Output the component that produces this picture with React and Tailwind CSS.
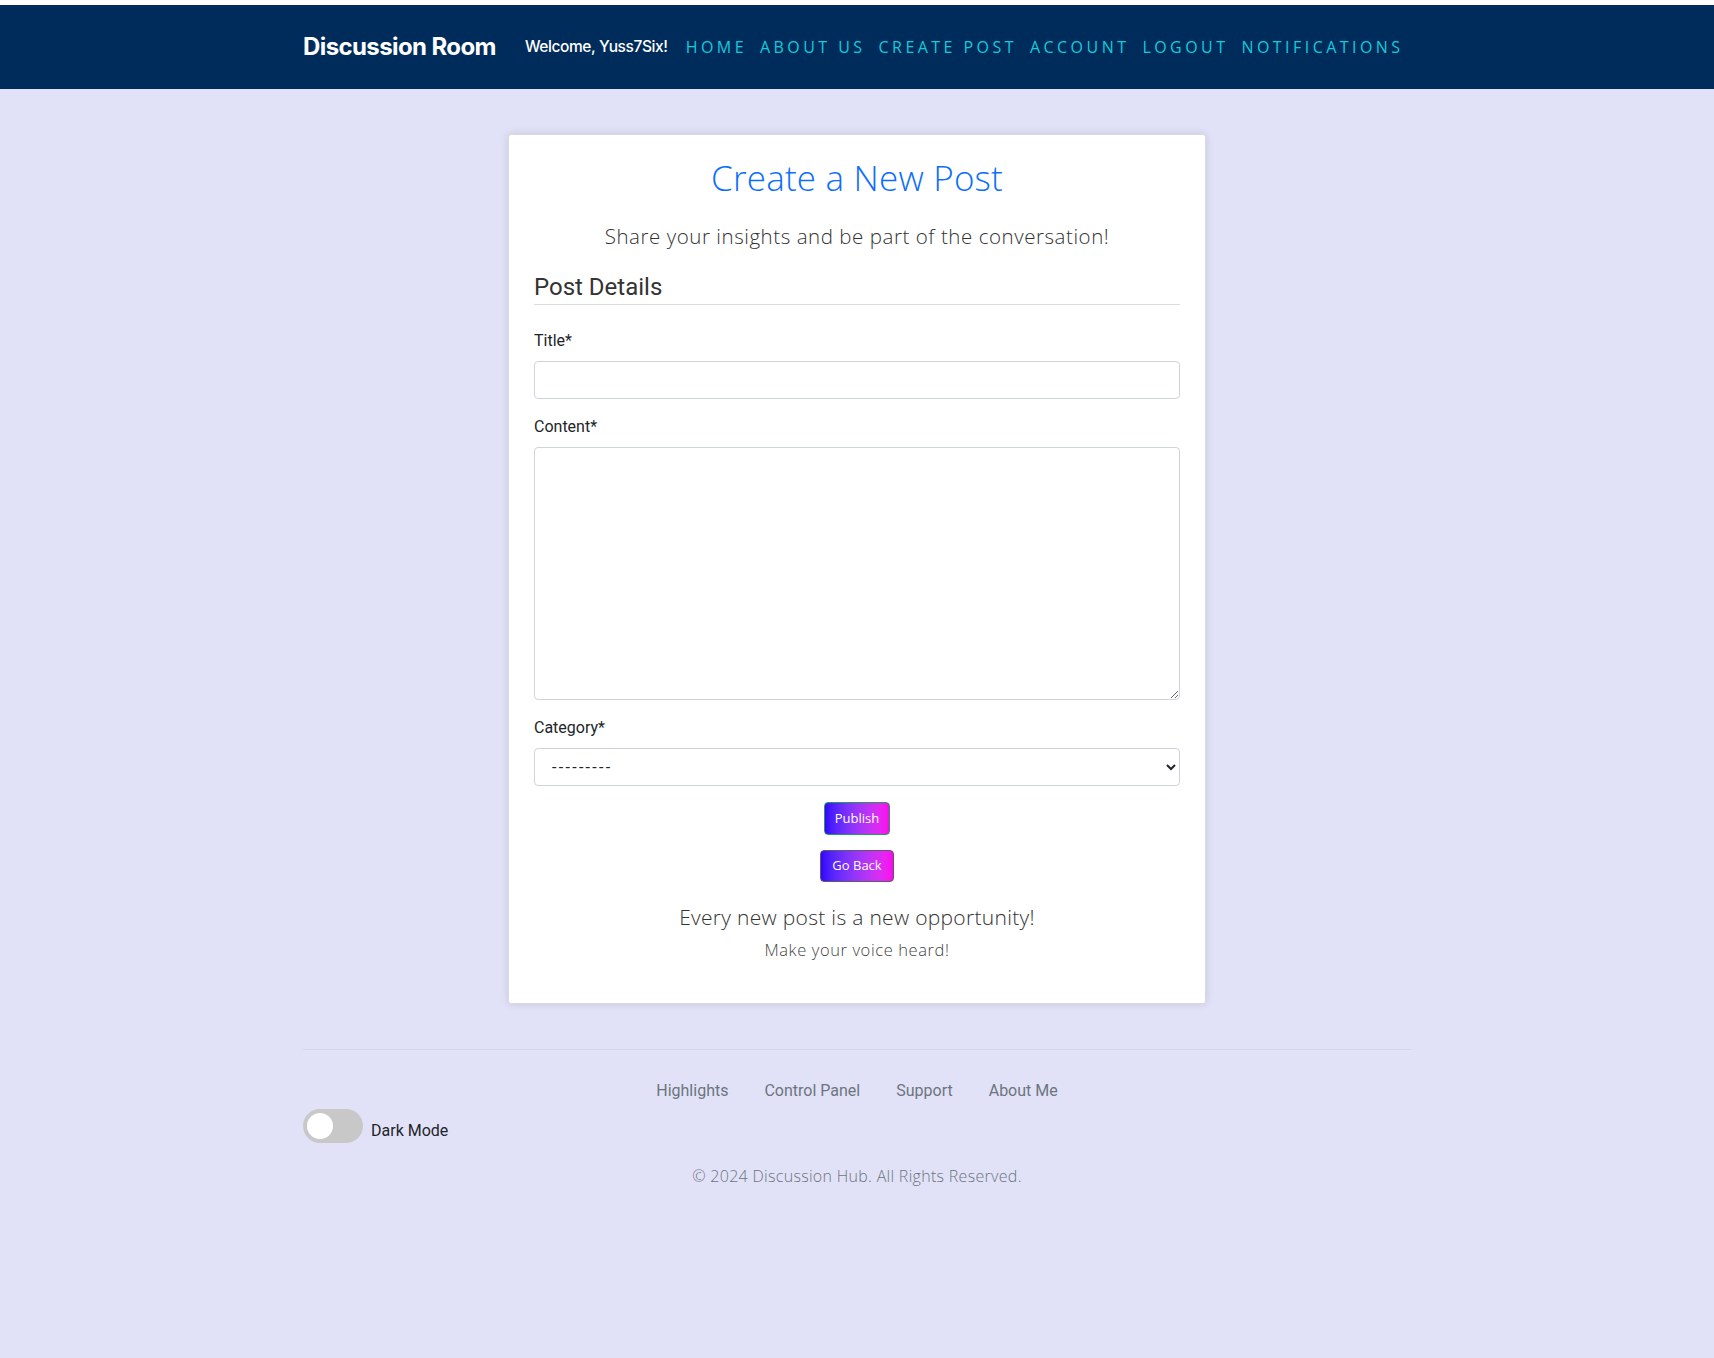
import { useState } from "react";

const poppins = { fontFamily: "'Open Sans', 'Lato', sans-serif" };

const navLinks = ["Home", "About Us", "Create Post", "Account", "Logout", "Notifications"];
const footerLinks = ["Highlights", "Control Panel", "Support", "About Me"];

function Field({ label, children }) {
  return (
    <div className="mb-[16px]">
      <label className="block text-[16px] text-[#212529] mb-[8px]">{label}</label>
      {children}
    </div>
  );
}

export default function App() {
  const [dark, setDark] = useState(false);

  return (
    <div className="min-h-screen pt-[5px] bg-white font-['Inter',sans-serif]">
      <nav className="bg-[#002c5b] h-[84px]">
        <div className="w-[1140px] mx-auto px-[16px] h-full flex items-center">
          <span className="text-white font-bold text-[24px] tracking-[-0.6px]">Discussion Room</span>
          <span className="text-white font-medium text-[15.5px] ml-[29px] tracking-[-0.4px]">Welcome, Yuss7Six!</span>
          <ul className="flex items-center ml-[18px] gap-[13px]">
            {navLinks.map((l) => (
              <li key={l} className="text-[#14cadb] uppercase text-[16px] tracking-[3.45px]" style={poppins}>
                {l}
              </li>
            ))}
          </ul>
        </div>
      </nav>

      <div className="bg-[#e1e2f7] pb-[200px]">
        <main className="pt-[45px] flex justify-center">
          <div className="w-[698px] bg-white rounded-[3px] border border-[#d9d9e6] shadow-[0_0_8px_rgba(0,0,0,0.12)] px-[25px] pt-[22px] pb-[41px]">
            <h1 className="text-center text-[#0d6efd] text-[35px] font-light leading-[1.2] tracking-[0.2px]" style={poppins}>
              Create a New Post
            </h1>
            <p className="text-center text-[#333] text-[20.5px] font-light mt-[22px] tracking-[0.55px]" style={poppins}>
              Share your insights and be part of the conversation!
            </p>
            <h2 className="text-[24px] leading-[1.1] text-[#333] mt-[22px] pb-[4px] border-b border-[#dcdcdc] font-['Roboto',sans-serif]">
              Post Details
            </h2>

            <div className="mt-[24px] font-['Roboto',sans-serif]">
              <Field label="Title*">
                <input className="w-full h-[38px] rounded-[4px] border border-[#ced4da] bg-white px-3" />
              </Field>
              <Field label="Content*">
                <textarea className="w-full h-[253px] rounded-[4px] border border-[#ced4da] bg-white px-3 py-2 block" />
              </Field>
              <Field label="Category*">
                <select className="w-full h-[38px] rounded-[4px] border border-[#ced4da] bg-white pl-[13px] pr-[8px] text-[16px] text-[#212529] tracking-[2.3px]">
                  <option>---------</option>
                </select>
              </Field>
            </div>

            <div className="flex flex-col items-center gap-[15px]">
              <button
                className="w-[66px] h-[33px] rounded-[4px] border border-[#1f9d5c] bg-gradient-to-r from-[#3300ff] to-[#ff00ee] text-white text-[13px]"
                style={poppins}
              >
                Publish
              </button>
              <button
                className="w-[74px] h-[32px] rounded-[4px] border border-[#5a5a70] bg-gradient-to-r from-[#3300ff] to-[#ff00ee] text-white text-[13px]"
                style={poppins}
              >
                Go Back
              </button>
            </div>

            <p className="text-center text-[#333] text-[21px] font-light mt-[20px] tracking-[0.3px]" style={poppins}>
              Every new post is a new opportunity!
            </p>
            <p className="text-center text-[#444] text-[16.5px] font-light mt-[4px] tracking-[0.6px]" style={poppins}>
              Make your voice heard!
            </p>
          </div>
        </main>

        <footer className="w-[1140px] mx-auto px-[16px] mt-[45px]">
          <div className="border-t border-[#d3d5e8]" />
          <ul className="flex justify-center gap-[36px] mt-[29px] text-[16px] text-[#6c757d] font-['Roboto',sans-serif]">
            {footerLinks.map((l) => (
              <li key={l}>{l}</li>
            ))}
          </ul>
          <div className="flex items-center mt-[6px]">
            <button
              onClick={() => setDark(!dark)}
              className="w-[60px] h-[34px] rounded-full bg-[#c8c8c8] flex items-center px-[4px]"
            >
              <span className="w-[26px] h-[26px] rounded-full bg-white block" />
            </button>
            <span className="ml-[8px] text-[16px] text-[#212529] font-['Roboto',sans-serif] mt-[10px]">Dark Mode</span>
          </div>
          <p className="text-center text-[16px] text-[#6c757d] font-light mt-[21px] tracking-[0.3px]" style={poppins}>
            © 2024 Discussion Hub. All Rights Reserved.
          </p>
        </footer>
      </div>
    </div>
  );
}
